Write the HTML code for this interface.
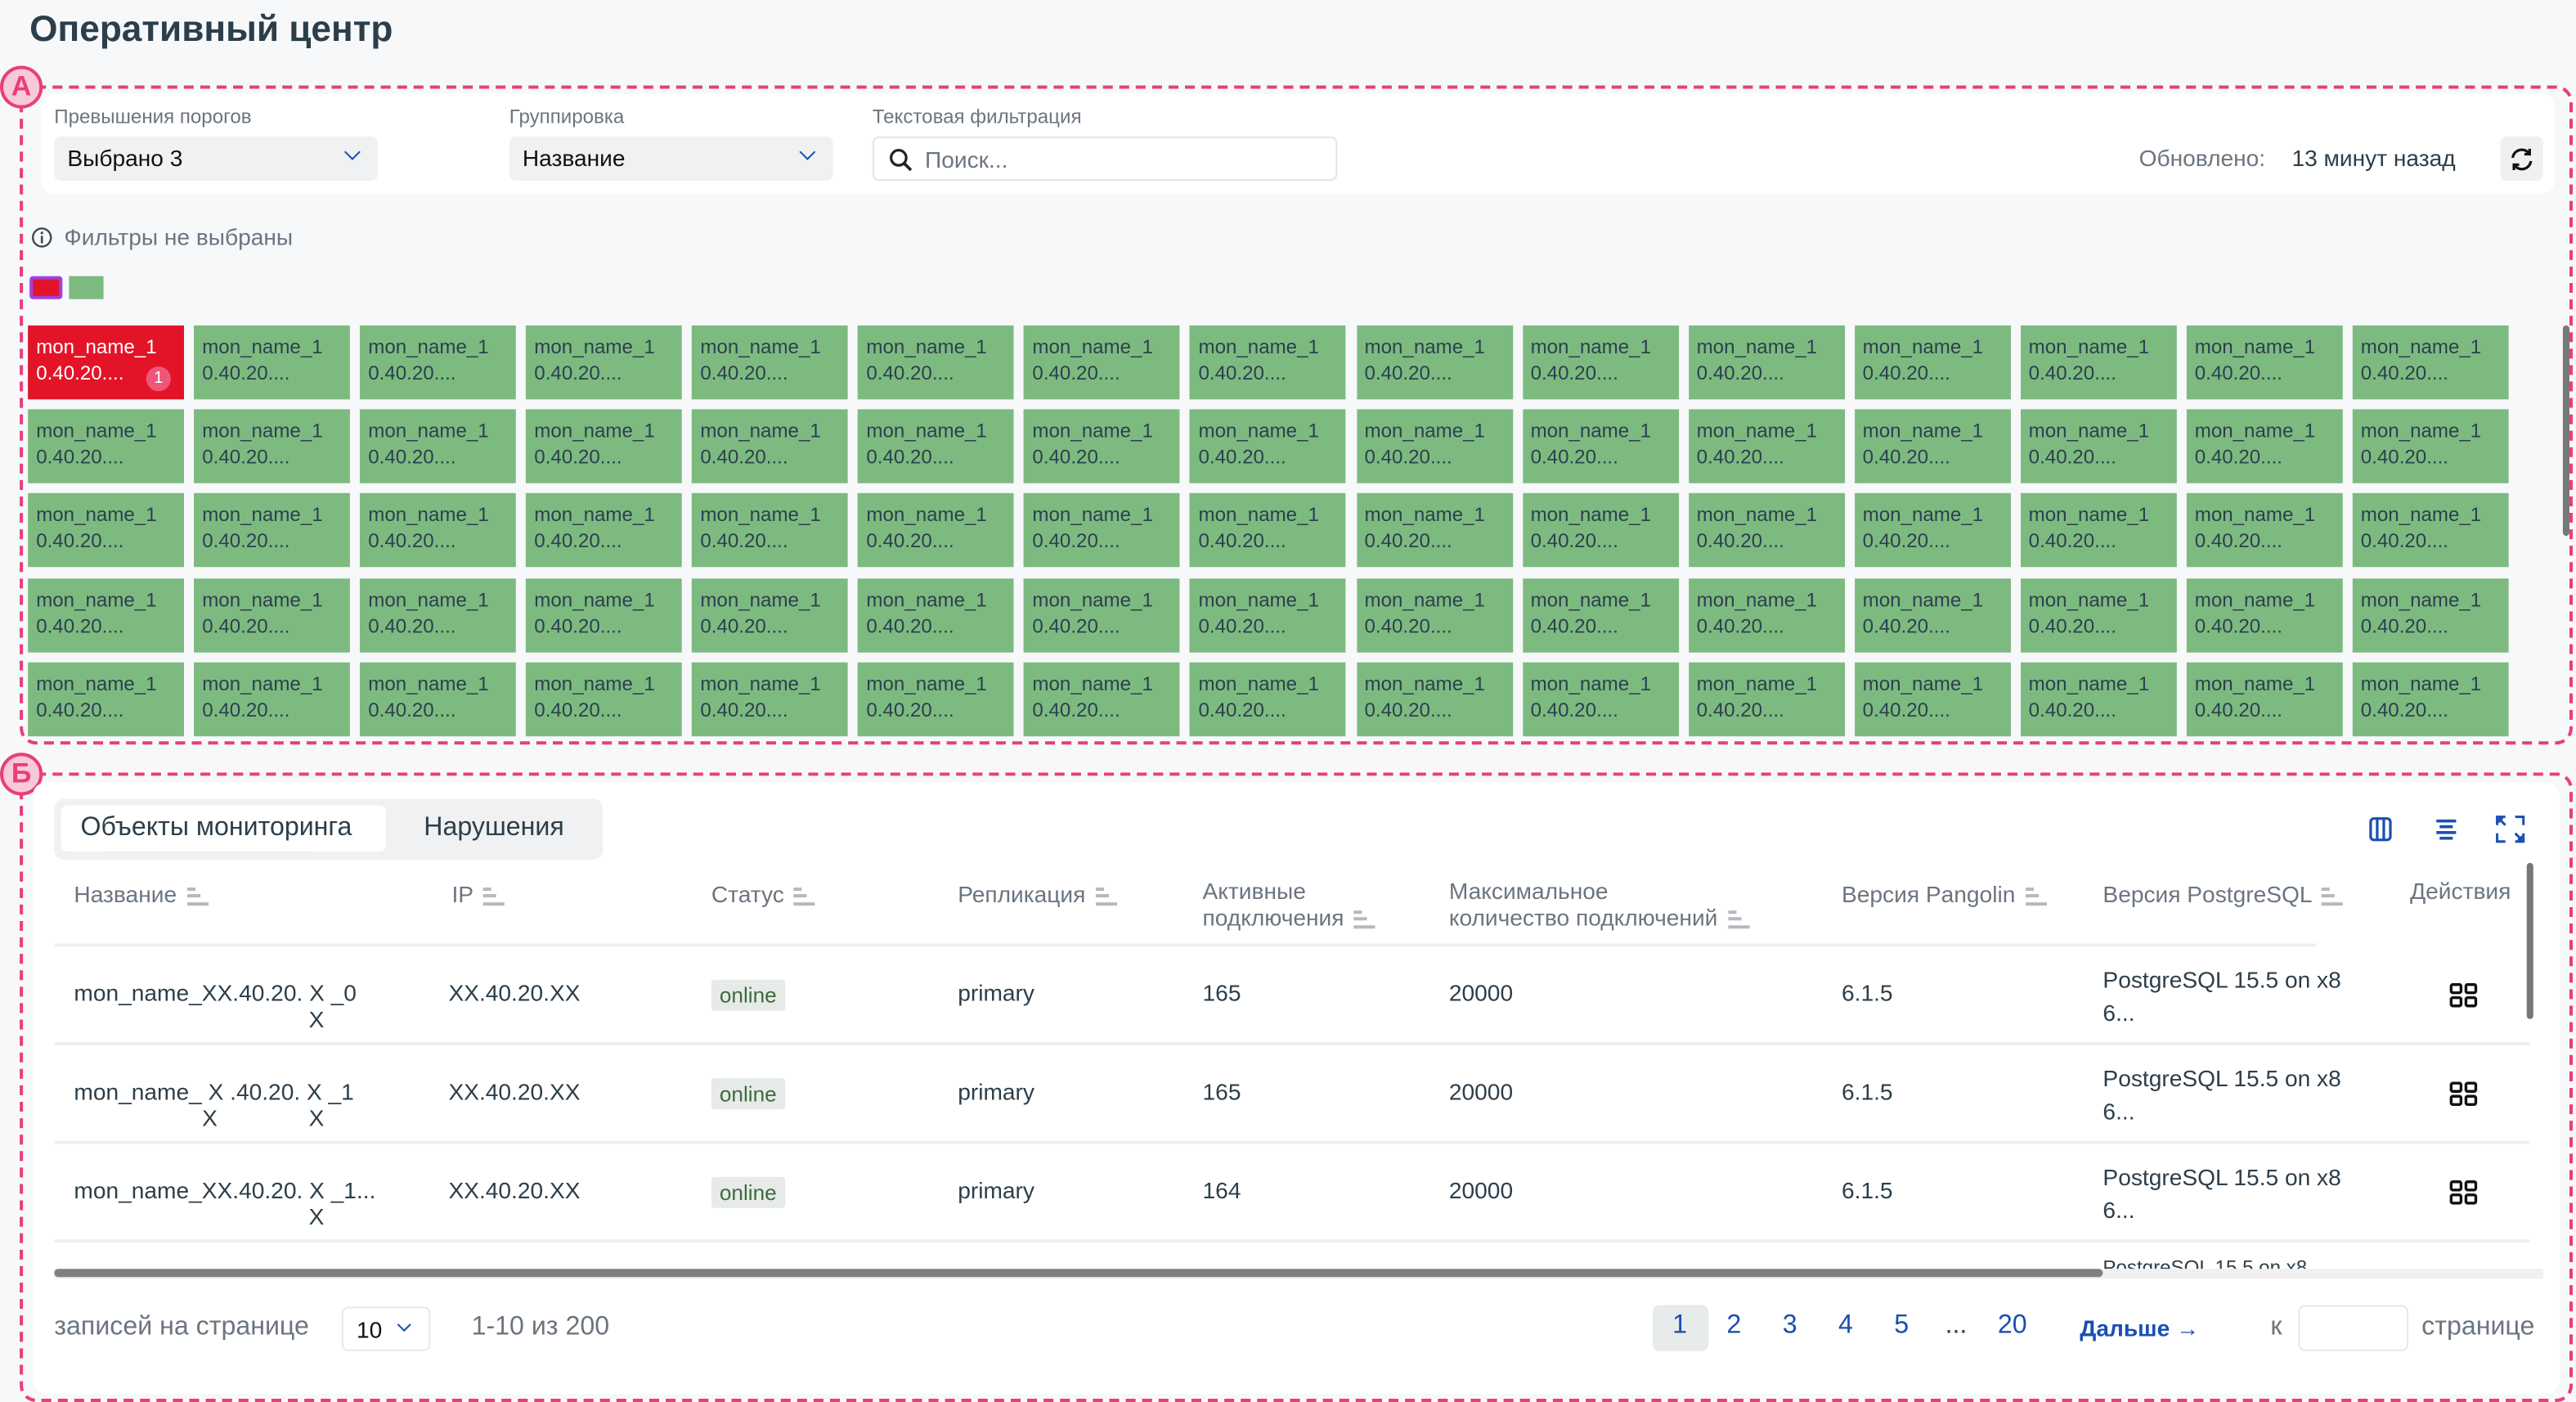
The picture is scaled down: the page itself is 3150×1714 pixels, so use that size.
<!DOCTYPE html>
<html><head><meta charset="utf-8"><style>
*{box-sizing:border-box;margin:0;padding:0}
html,body{width:3150px;height:1714px;overflow:hidden;background:#f7f8fa}
#w{position:absolute;left:0;top:0;width:1568px;height:853px;transform:scale(2.00893,2.0094);transform-origin:0 0;font-family:"Liberation Sans","DejaVu Sans",sans-serif;color:#2c3e4a}
.a{position:absolute;white-space:nowrap}
.dash{position:absolute;border:2px dashed #e83e7a;border-radius:10px}
.badge{position:absolute;width:26px;height:26px;border-radius:50%;border:2px solid #e83e7a;background:#f9c9da;color:#e83e7a;font-weight:bold;font-size:17px;text-align:center;line-height:22px}
.lbl{font-size:12px;color:#6b7580}
.sel{position:absolute;height:27px;background:#f0f1f2;border-radius:4px;font-size:14px;color:#111;padding:5px 8px}
.chev{position:absolute;right:12px;top:6px;width:7px;height:7px;border-right:1.6px solid #1a4fb0;border-bottom:1.6px solid #1a4fb0;transform:rotate(45deg)}
.t{position:absolute;width:95px;height:45px;background:#7dba7f;font-size:12px;line-height:16px;padding:5px 0 0 5px;color:#2c4050}
.th{position:absolute;font-size:14px;color:#6b7580;line-height:16px}
.si{display:inline-block;width:13px;height:11px;vertical-align:middle;margin-left:6px;background:linear-gradient(#b5b9bd,#b5b9bd) 0 0/5px 2px no-repeat,linear-gradient(#b5b9bd,#b5b9bd) 0 4px/8px 2px no-repeat,linear-gradient(#b5b9bd,#b5b9bd) 0 9px/13px 2px no-repeat}
.td{position:absolute;font-size:14px;color:#2c3e4a}
.on{position:absolute;background:#e6ebe7;color:#3d6b3f;font-size:13px;padding:2px 5px;border-radius:2px}
.pg{position:absolute;font-size:16px;color:#1a4fb0;top:798px}
</style></head><body><div id="w">
<div class="a" style="left:18px;top:5px;font-size:22px;font-weight:bold;color:#2c3e4a">Оперативный центр</div>

<div class="dash" style="left:12px;top:52px;width:1554px;height:401px"></div>
<div class="badge" style="left:0;top:40px">А</div>
<div class="a" style="left:25px;top:57px;width:1530px;height:61px;background:#fff;border-radius:8px"></div>
<div class="a lbl" style="left:33px;top:64px">Превышения порогов</div>
<div class="a lbl" style="left:310px;top:64px">Группировка</div>
<div class="a lbl" style="left:531px;top:64px">Текстовая фильтрация</div>
<div class="sel" style="left:33px;top:83px;width:197px">Выбрано 3<div class="chev"></div></div>
<div class="sel" style="left:310px;top:83px;width:197px">Название<div class="chev"></div></div>
<div class="a" style="left:531px;top:83px;width:283px;height:27px;border:1px solid #e2e4e6;border-radius:4px;background:#fff;font-size:14px;color:#6b7580;padding:5px 0 0 31px">Поиск...
<svg style="position:absolute;left:9px;top:6px" width="15" height="15" viewBox="0 0 15 15"><circle cx="6" cy="6" r="4.6" fill="none" stroke="#222" stroke-width="1.6"/><path d="M9.5 9.5L13.5 13.5" stroke="#222" stroke-width="1.8"/></svg></div>
<div class="a" style="left:1302px;top:88px;font-size:14px;color:#6b7580">Обновлено:</div>
<div class="a" style="left:1395px;top:88px;font-size:14px;color:#2c3e4a">13 минут назад</div>
<div class="a" style="left:1522px;top:83px;width:26px;height:27px;background:#f0f0f0;border-radius:4px">
<svg style="position:absolute;left:5px;top:6px" width="16" height="16" viewBox="0 0 16 16" fill="none" stroke="#111" stroke-width="1.6"><path d="M2.5 7A5.5 5.5 0 0 1 12.5 4.5"/><path d="M13.5 9A5.5 5.5 0 0 1 3.5 11.5"/><path d="M12.8 1.5V4.8H9.6"/><path d="M3.2 14.5V11.2H6.4"/></svg></div>

<svg class="a" style="left:19px;top:138px" width="13" height="13" viewBox="0 0 13 13"><circle cx="6.5" cy="6.5" r="5.5" fill="none" stroke="#3a4a56" stroke-width="1.2"/><path d="M6.5 5.5V10" stroke="#3a4a56" stroke-width="1.3"/><circle cx="6.5" cy="3.7" r=".8" fill="#3a4a56"/></svg>
<div class="a" style="left:39px;top:136px;font-size:14px;color:#6b7580">Фильтры не выбраны</div>
<div class="a" style="left:18px;top:168px;width:20px;height:14px;background:#e31428;border:2px solid #a040e0;border-radius:2px"></div>
<div class="a" style="left:42px;top:168px;width:21px;height:14px;background:#7dba7f"></div>

<div id="grid"></div>
<div class="a" style="left:1560px;top:198px;width:4px;height:128px;background:#777;border-radius:2px"></div>

<div class="dash" style="left:12px;top:470px;width:1554px;height:383px"></div>
<div class="badge" style="left:0;top:458px">Б</div>
<div class="a" style="left:20px;top:476px;width:1538px;height:372px;background:#fff;border-radius:8px"></div>
<div class="a" style="left:33px;top:486px;width:334px;height:37px;background:#f0f1f2;border-radius:6px"></div>
<div class="a" style="left:37px;top:490px;width:198px;height:28px;background:#fff;border-radius:4px"></div>
<div class="a" style="left:49px;top:495px;font-size:16px;color:#2c3e4a">Объекты мониторинга</div>
<div class="a" style="left:258px;top:495px;font-size:16px;color:#2c3e4a">Нарушения</div>
<svg class="a" style="left:1442px;top:497px" width="14" height="15" viewBox="0 0 14 15" fill="none" stroke="#1a4fb0" stroke-width="1.6"><rect x="1" y="1" width="12" height="13" rx="2"/><path d="M5 1V14M9 1V14"/></svg>
<svg class="a" style="left:1482px;top:498px" width="14" height="13" viewBox="0 0 14 13" stroke="#1a4fb0" stroke-width="1.8"><path d="M1 1.5H13M3 5H11M1 8.5H13M3 12H11"/></svg>
<svg class="a" style="left:1519px;top:496px" width="18" height="17" viewBox="0 0 18 17" fill="none" stroke="#1a4fb0" stroke-width="1.5"><path d="M1 6V1H6M12 1H17V6M17 11V16H12M6 16H1V11"/><path d="M2 2L6 6M16 15L12 11M2 2V4.5M2 2H4.5M16 15V12.5M16 15H13.5"/></svg>

<div class="th" style="left:45px;top:536px">Название<span class="si"></span></div>
<div class="th" style="left:275px;top:536px">IP<span class="si"></span></div>
<div class="th" style="left:433px;top:536px">Статус<span class="si"></span></div>
<div class="th" style="left:583px;top:536px">Репликация<span class="si"></span></div>
<div class="th" style="left:732px;top:534px">Активные<br>подключения<span class="si"></span></div>
<div class="th" style="left:882px;top:534px">Максимальное<br>количество подключений<span class="si"></span></div>
<div class="th" style="left:1121px;top:536px">Версия Pangolin<span class="si"></span></div>
<div class="th" style="left:1280px;top:536px">Версия PostgreSQL<span class="si"></span></div>
<div class="th" style="left:1467px;top:534px">Действия</div>
<div class="a" style="left:33px;top:574px;width:1377px;height:2px;background:#efefef"></div>
<div class="a" style="left:1538px;top:525px;width:4px;height:95px;background:#777;border-radius:2px"></div>
<div id="rows"></div>
<div class="a" style="left:33px;top:772px;width:1515px;height:6px;background:#f0f0f0"></div>
<div class="a" style="left:33px;top:772px;width:1247px;height:5px;background:#808080;border-radius:3px"></div>

<div class="a" style="left:33px;top:799px;font-size:16px;color:#6b7580">записей на странице</div>
<div class="a" style="left:208px;top:795px;width:54px;height:27px;border:1px solid #e8e8e8;border-radius:4px;font-size:14px;color:#111;padding:5px 0 0 8px">10<div class="chev" style="right:12px;top:7px;width:6px;height:6px"></div></div>
<div class="a" style="left:287px;top:799px;font-size:16px;color:#6b7580">1-10 из 200</div>
<div class="a" style="left:1006px;top:794px;width:34px;height:28px;background:#e8ebeb;border-radius:4px"></div>
<div class="pg" style="left:1018px">1</div><div class="pg" style="left:1051px">2</div><div class="pg" style="left:1085px">3</div><div class="pg" style="left:1119px">4</div><div class="pg" style="left:1153px">5</div><div class="pg" style="left:1184px;color:#2c3e4a">...</div><div class="pg" style="left:1216px">20</div>
<div class="pg" style="left:1266px;font-size:14px;top:800px;font-weight:bold">Дальше →</div>
<div class="a" style="left:1382px;top:799px;font-size:16px;color:#6b7580">к</div>
<div class="a" style="left:1399px;top:794px;width:67px;height:28px;border:1px solid #e8e8e8;border-radius:4px"></div>
<div class="a" style="left:1474px;top:799px;font-size:16px;color:#6b7580">странице</div>
</div>
<script>
var g='';for(var r=0;r<5;r++)for(var c=0;c<15;c++){var x=17+c*101.07,y=198+r*51.2;var red=(r==0&&c==0);
g+='<div class="t" style="left:'+x+'px;top:'+y+'px;'+(red?'background:#e31428;color:#fff':'')+'">mon_name_1<br>0.40.20....'+(red?'<span style="position:absolute;left:72px;top:25px;width:15px;height:15px;border-radius:50%;background:#f0557a;font-size:10px;line-height:15px;text-align:center">1</span>':'')+'</div>';}
document.getElementById('grid').innerHTML=g;
var names=[['mon_name_XX.40.20. X _0','X',''],['mon_name_ X .40.20. X _1','X','X'],['mon_name_XX.40.20. X _1...','X','']],ac=['165','165','164'],h='';
for(var i=0;i<3;i++){var y=605+i*60;
h+='<div class="td" style="left:45px;top:'+(y-9)+'px">'+names[i][0]+'</div><div class="td" style="left:188px;top:'+(y+7)+'px">'+names[i][1]+'</div>'+(names[i][2]?'<div class="td" style="left:123px;top:'+(y+7)+'px">X</div>':'');
h+='<div class="td" style="left:273px;top:'+(y-9)+'px">XX.40.20.XX</div><div class="on" style="left:433px;top:'+(y-9)+'px">online</div>';
h+='<div class="td" style="left:583px;top:'+(y-9)+'px">primary</div><div class="td" style="left:732px;top:'+(y-9)+'px">'+ac[i]+'</div><div class="td" style="left:882px;top:'+(y-9)+'px">20000</div><div class="td" style="left:1121px;top:'+(y-9)+'px">6.1.5</div>';
h+='<div class="td" style="left:1280px;top:'+(y-19)+'px;line-height:20px">PostgreSQL 15.5 on x8<br>6...</div>';
h+='<svg class="a" style="left:1491px;top:'+(y-7)+'px" width="17" height="15" viewBox="0 0 17 15" fill="none" stroke="#111" stroke-width="1.7"><rect x="1" y="1" width="6" height="5" rx="1"/><rect x="10" y="1" width="6" height="5" rx="1"/><rect x="1" y="9" width="6" height="5" rx="1"/><rect x="10" y="9" width="6" height="5" rx="1"/></svg>';
h+='<div class="a" style="left:33px;top:'+(y+29)+'px;width:1507px;height:2px;background:#efefef"></div>';}
h+='<div class="td" style="left:1280px;top:764px;font-size:12px;height:8px;overflow:hidden">PostgreSQL 15.5 on x8</div>';
document.getElementById('rows').innerHTML=h;
</script>
</body></html>
